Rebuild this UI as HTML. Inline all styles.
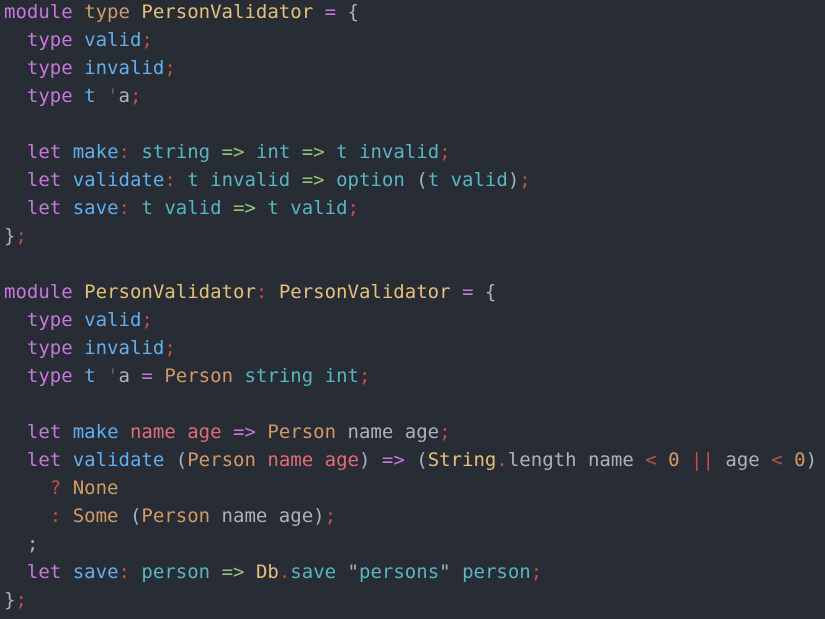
<!DOCTYPE html>
<html><head><style>
html,body{margin:0;padding:0;background:#282c34;width:825px;height:619px;overflow:hidden}
pre{margin:0;position:absolute;left:4px;top:-2px;font-family:"DejaVu Sans Mono","Liberation Mono",monospace;font-size:19px;line-height:28px;color:#abb2bf;letter-spacing:0.01px}
.k{color:#c678dd}.b{color:#61afef}.y{color:#e5c07b}.o{color:#d19a66}.r{color:#e06c75}.c{color:#56b6c2}.g{color:#98c379}.s{color:#be5046}.d{color:#5c6370}
</style></head><body><pre><span class="k">module</span> <span class="o">type</span> <span class="y">PersonValidator</span> <span class="k">=</span> {
  <span class="k">type</span> <span class="b">valid</span><span class="s">;</span>
  <span class="k">type</span> <span class="b">invalid</span><span class="s">;</span>
  <span class="k">type</span> <span class="b">t</span> <span class="d">'</span>a<span class="s">;</span>

  <span class="k">let</span> <span class="b">make</span><span class="s">:</span> <span class="c">string</span> <span class="g">=&gt;</span> <span class="c">int</span> <span class="g">=&gt;</span> <span class="c">t invalid</span><span class="s">;</span>
  <span class="k">let</span> <span class="b">validate</span><span class="s">:</span> <span class="c">t invalid</span> <span class="g">=&gt;</span> <span class="c">option</span> (<span class="c">t valid</span>)<span class="s">;</span>
  <span class="k">let</span> <span class="b">save</span><span class="s">:</span> <span class="c">t valid</span> <span class="g">=&gt;</span> <span class="c">t valid</span><span class="s">;</span>
}<span class="s">;</span>

<span class="k">module</span> <span class="y">PersonValidator</span><span class="s">:</span> <span class="y">PersonValidator</span> <span class="k">=</span> {
  <span class="k">type</span> <span class="b">valid</span><span class="s">;</span>
  <span class="k">type</span> <span class="b">invalid</span><span class="s">;</span>
  <span class="k">type</span> <span class="b">t</span> <span class="d">'</span>a <span class="k">=</span> <span class="o">Person</span> <span class="c">string int</span><span class="s">;</span>

  <span class="k">let</span> <span class="b">make</span> <span class="r">name age</span> <span class="k">=&gt;</span> <span class="o">Person</span> name age<span class="s">;</span>
  <span class="k">let</span> <span class="b">validate</span> (<span class="o">Person</span> <span class="r">name age</span>) <span class="k">=&gt;</span> (<span class="y">String</span><span class="s">.</span>length name <span class="s">&lt;</span> <span class="o">0</span> <span class="s">||</span> age <span class="s">&lt;</span> <span class="o">0</span>)
    <span class="s">?</span> <span class="o">None</span>
    <span class="s">:</span> <span class="o">Some</span> (<span class="o">Person</span> name age)<span class="s">;</span>
  ;
  <span class="k">let</span> <span class="b">save</span><span class="s">:</span> <span class="c">person</span> <span class="g">=&gt;</span> <span class="y">Db</span><span class="s">.</span><span class="c">save</span> "<span class="c">persons</span>" <span class="c">person</span><span class="s">;</span>
}<span class="s">;</span>
</pre></body></html>
